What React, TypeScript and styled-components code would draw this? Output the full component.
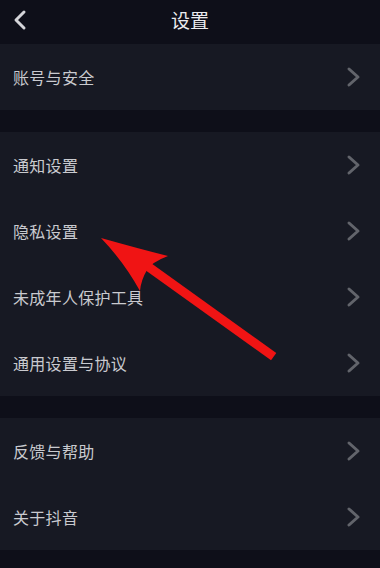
import React from "react";
import styled, { createGlobalStyle } from "styled-components";

const GlobalStyle = createGlobalStyle`
  html, body {
    margin: 0;
    padding: 0;
    background: #0e0f19;
  }
  body {
    font-family: "Noto Sans CJK SC", "Noto Sans", sans-serif;
  }
`;

const Page = styled.div`
  position: relative;
  width: 380px;
  height: 568px;
  overflow: hidden;
  background: #0e0f19;
  display: flex;
  flex-direction: column;
`;

const Header = styled.header`
  height: 44px;
  display: flex;
  align-items: center;
  justify-content: center;
  position: relative;
`;

const BackButton = styled.button`
  position: absolute;
  left: 10px;
  top: 8px;
  width: 20px;
  height: 24px;
  padding: 0;
  border: none;
  background: none;
  display: flex;
  align-items: center;
  justify-content: center;
`;

const Title = styled.h1`
  margin: 0;
  margin-top: -6px;
  font-size: 19px;
  font-weight: 400;
  color: #ebebee;
`;

const Section = styled.section<{ $gap?: boolean }>`
  background: #171923;
  margin-top: ${(p) => (p.$gap ? "22px" : "0")};
  display: flex;
  flex-direction: column;
`;

const Row = styled.div`
  height: 66px;
  display: flex;
  align-items: center;
  justify-content: space-between;
  padding: 0 18px 0 13px;
`;

const Label = styled.span`
  font-size: 16px;
  color: #c9cacf;
  letter-spacing: 0.3px;
`;

const Overlay = styled.svg`
  position: absolute;
  left: 0;
  top: 0;
  pointer-events: none;
`;

const Chevron = () => (
  <svg width="16" height="22" viewBox="0 0 16 22">
    <path
      d="M3 3 L12 11 L3 19"
      fill="none"
      stroke="#62646b"
      strokeWidth="3"
      strokeLinecap="round"
      strokeLinejoin="round"
    />
  </svg>
);

const sections = [
  ["账号与安全"],
  ["通知设置", "隐私设置", "未成年人保护工具", "通用设置与协议"],
  ["反馈与帮助", "关于抖音"],
];

const App = () => (
  <>
    <GlobalStyle />
    <Page>
      <Header>
        <BackButton aria-label="back">
          <svg width="16" height="22" viewBox="0 0 16 22">
            <path
              d="M12 3 L4 11 L12 19"
              fill="none"
              stroke="#d4d5d9"
              strokeWidth="3"
              strokeLinecap="round"
              strokeLinejoin="round"
            />
          </svg>
        </BackButton>
        <Title>设置</Title>
      </Header>
      {sections.map((items, i) => (
        <Section key={i} $gap={i > 0}>
          {items.map((label) => (
            <Row key={label}>
              <Label>{label}</Label>
              <Chevron />
            </Row>
          ))}
        </Section>
      ))}
      <Overlay width="380" height="568" viewBox="0 0 380 568">
        <line
          x1="150"
          y1="268"
          x2="270"
          y2="354"
          stroke="#f01414"
          strokeWidth="9"
          strokeLinecap="square"
        />
        <path
          d="M101 238 Q140 249 168 256 Q152 262 147 270 Q141 280 140 291 Q124 262 101 238 Z"
          fill="#f01414"
        />
      </Overlay>
    </Page>
  </>
);

export default App;
